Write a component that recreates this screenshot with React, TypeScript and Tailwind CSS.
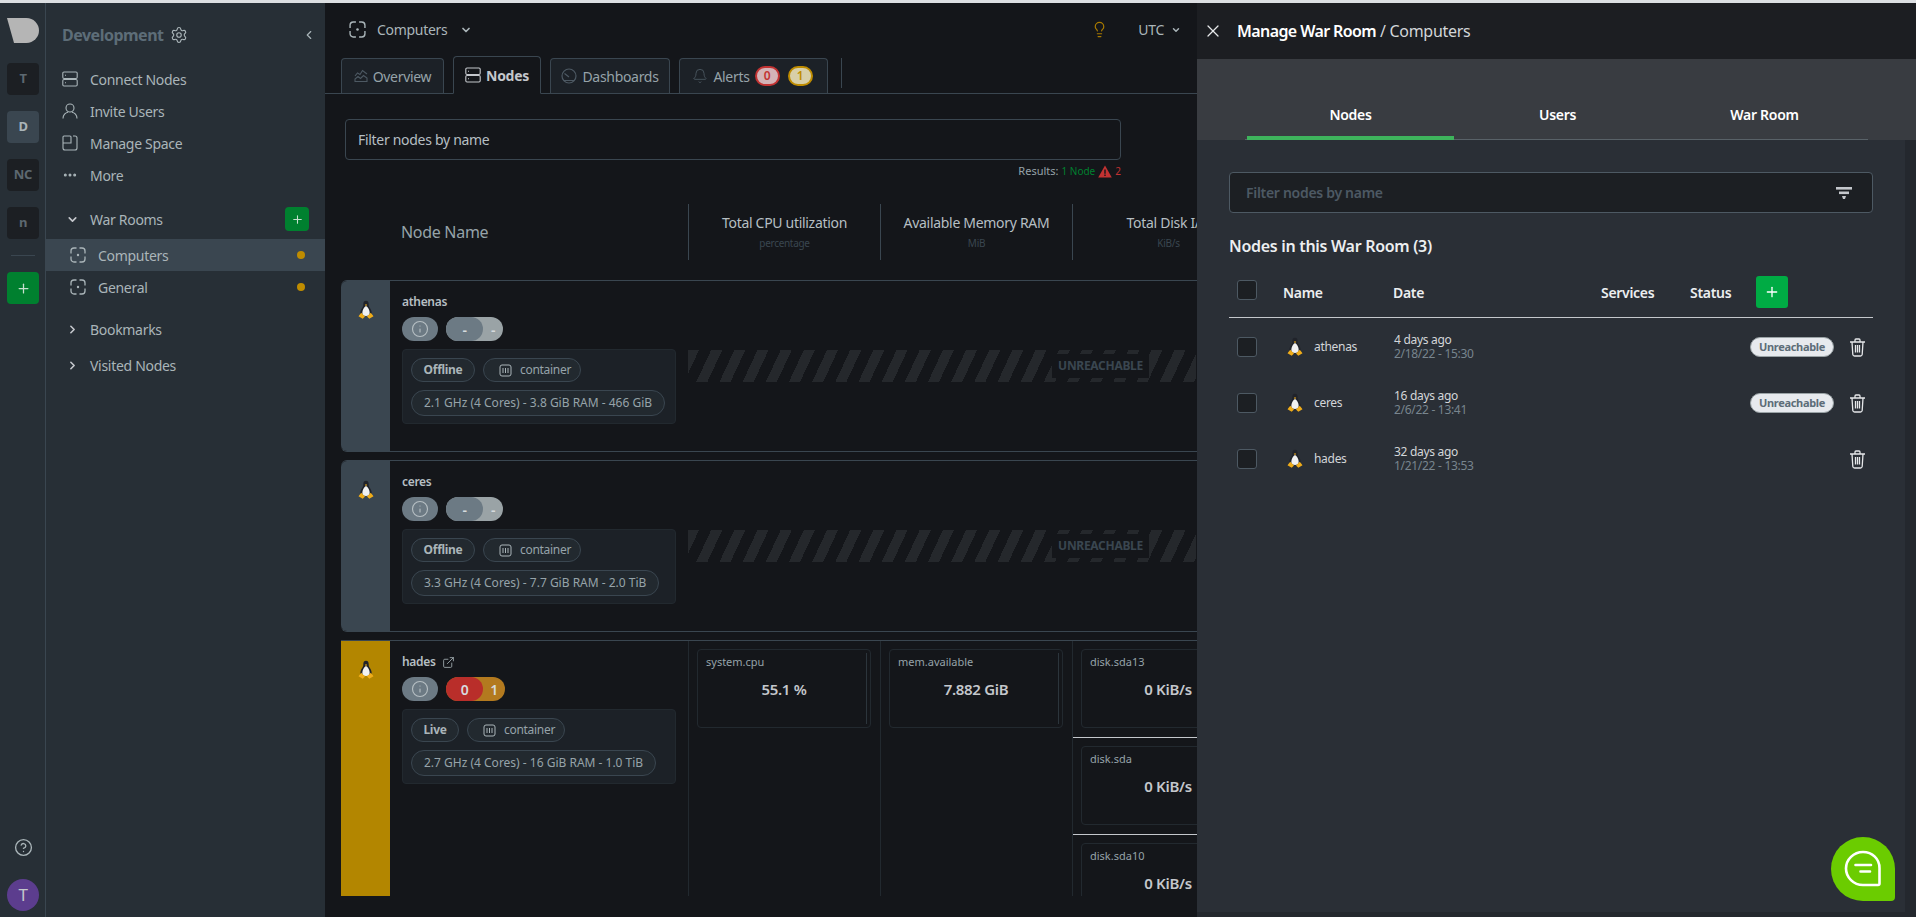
import React from "react";
import {
  Bell,
  ChevronDown,
  ChevronLeft,
  ChevronRight,
  CircleHelp,
  ExternalLink,
  Info,
  Lightbulb,
  MoreHorizontal,
  Plus,
  Settings,
  X,
} from "lucide-react";

const Tux = ({ size = 20 }: { size?: number }) => (
  <svg width={size} height={size} viewBox="0 0 20 20">
    <path d="M10 .8c-2 0-2.800 1.600-2.700 3.600.1 1.700-.7 2.700-1.700 4.400C4.500 10.700 4 12.700 4.600 15h10.800c.6-2.300.1-4.300-1-6.200-1-1.700-1.800-2.700-1.700-4.400C12.800 2.400 12 .8 10 .8z" fill="#20232a" />
    <path d="M10 6c-1.900 1-3.700 4.100-3.700 7 0 1.800 1.600 3 3.700 3s3.700-1.200 3.700-3c0-2.900-1.800-6-3.700-7z" fill="#f1f1f1" />
    <path d="M8.800 4.400h2.400L10 6.200z" fill="#f0ad1a" />
    <path d="M5.200 12.800l-2.700 3.400 4.200 2.600 2.300-2.400zM14.800 12.800l2.700 3.400-4.200 2.600-2.300-2.400z" fill="#f0ad1a" />
  </svg>
);

// server rack icon used in the sidebar and the Nodes tab
const NodesIcon = ({ className }: { className?: string }) => (
  <svg className={className} viewBox="0 0 16 16" fill="none" stroke="currentColor" strokeWidth="1.100">
    <rect x=".8" y="1" width="14.400" height="6.500" rx="1.200" />
    <rect x=".8" y="8.500" width="14.400" height="6.500" rx="1.200" />
    <path d="M3 4.200h1M3 11.800h1" />
  </svg>
);

const SpaceIcon = ({ className }: { className?: string }) => (
  <svg className={className} viewBox="0 0 16 16" fill="none" stroke="currentColor" strokeWidth="1.300">
    <path d="M6.500 1H4a3 3 0 0 0-3 3v2.500M9.500 1H12a3 3 0 0 1 3 3v2.500M6.500 15H4a3 3 0 0 1-3-3V9.500M9.500 15H12a3 3 0 0 0 3-3V9.500" />
    <circle cx="8" cy="8" r="1.200" fill="currentColor" stroke="none" />
  </svg>
);

const UserIcon = () => (
  <svg className="w-4 h-4" viewBox="0 0 16 16" fill="none" stroke="currentColor" strokeWidth="1.100">
    <circle cx="8" cy="5" r="4" />
    <path d="M1 15.500c0-3.500 2.500-6 5-6.300M15 15.500c0-3.500-2.500-6-5-6.300" />
  </svg>
);

const ManageIcon = () => (
  <svg className="w-4 h-4" viewBox="0 0 16 16" fill="none" stroke="currentColor" strokeWidth="1.100">
    <path d="M11 1h2a2 2 0 0 1 2 2v10a2 2 0 0 1-2 2H3a2 2 0 0 1-2-2V8h8V2a1 1 0 0 0-1-1H2a1 1 0 0 0-1 1v6" />
  </svg>
);

const OverviewIcon = () => (
  <svg className="w-[14px] h-[14px] text-[#4d5963]" viewBox="0 0 14 14" fill="none" stroke="currentColor" strokeWidth="1.100">
    <path d="M1 7l2.500-3L6 5.500 8.500 1.500 13 5M1 12.500V10l3-2.500 2.500 2 3-3L13 9v3.500z" />
  </svg>
);

const DashboardIcon = () => (
  <svg className="w-4 h-4 text-[#4d5963]" viewBox="0 0 16 16" fill="none" stroke="currentColor" strokeWidth="1.200">
    <circle cx="8" cy="8" r="7" />
    <path d="M8 9L3.500 5.500M2.500 12.500h11" />
  </svg>
);

const ContainerIcon = () => (
  <svg className="w-[13px] h-[13px] text-[#aab5b9]" viewBox="0 0 13 13" fill="none" stroke="currentColor">
    <rect x="1" y="1" width="11" height="11" rx="2" />
    <path d="M4 4v5M6.500 4v5M9 4v5" />
  </svg>
);

const TrashIcon = () => (
  <svg className="w-[17px] h-[19px] text-[#e6e8ea]" viewBox="0 0 17 19" fill="none" stroke="currentColor" strokeWidth="1.300">
    <path d="M1 4h15M6 4V2a1 1 0 0 1 1-1h3a1 1 0 0 1 1 1v2M3 4l.8 12.500A1.800 1.800 0 0 0 5.600 18h5.800a1.800 1.800 0 0 0 1.800-1.500L14 4M6.500 7v7.500M8.500 7v7.500M10.500 7v7.500" />
  </svg>
);

const FilterIcon = () => (
  <svg className="w-4 h-3 text-[#c4c7cc]" viewBox="0 0 16 12" fill="currentColor">
    <rect x="0" y="0" width="16" height="2.600" />
    <rect x="3" y="4.500" width="10" height="2.600" />
    <path d="M6 9h4l-1 3H7z" />
  </svg>
);

const SpaceTile = ({ label, active }: { label: string; active?: boolean }) => (
  <div
    className={`w-8 h-8 rounded flex items-center justify-center text-[13px] font-bold ${
      active ? "bg-[#3a4650] text-[#aab5b9]" : "bg-[#1c1f23] text-[#5d6870]"
    }`}
  >
    {label}
  </div>
);

const Rail = () => (
  <div className="w-[46px] shrink-0 bg-[#272f36] border-r border-[#3a4650] flex flex-col items-center pl-px pb-[6px]">
    <svg className="mt-[15px] w-8 h-[26px]" viewBox="0 0 32 26">
      <path d="M0 0h19.500a12.500 12.500 0 0 1 0 25H7z" fill="#b5b5b5" />
    </svg>
    <div className="mt-[19px] flex flex-col gap-4">
      <SpaceTile label="T" />
      <SpaceTile label="D" active />
      <SpaceTile label="NC" />
      <SpaceTile label="n" />
    </div>
    <div className="w-6 h-px bg-[#3a4650] mt-4" />
    <div className="mt-4 w-8 h-8 rounded bg-[#00802f] flex items-center justify-center">
      <Plus className="w-[15px] h-[15px] text-[#c7dfcf]" strokeWidth={2} />
    </div>
    <CircleHelp className="mt-auto w-[19px] h-[19px] text-[#aab5b9]" strokeWidth={1.700} />
    <div className="mt-[22px] w-8 h-8 rounded-full bg-[#5c3d8e] text-[#c4c7cc] flex items-center justify-center text-[17px]">
      T
    </div>
  </div>
);

const NavLink = ({ icon, label }: { icon: React.ReactNode; label: string }) => (
  <div className="h-8 flex items-center gap-3 pl-4 text-[14px] text-[#aab5b9]">
    <span className="w-4 flex justify-center">{icon}</span>
    {label}
  </div>
);

const RoomRow = ({ label, active }: { label: string; active?: boolean }) => (
  <div className={`h-8 flex items-center pl-6 pr-5 text-[14px] text-[#aab5b9] ${active ? "bg-[#3a4650]" : ""}`}>
    <SpaceIcon className="w-4 h-4 mr-3" />
    {label}
    <span className="ml-auto w-2 h-2 rounded-full bg-[#bf8c00]" />
  </div>
);

const Sidebar = () => (
  <div className="w-[279px] shrink-0 bg-[#272f36] flex flex-col">
    <div className="h-[26px] mt-[19px] flex items-center pl-4 pr-[9px]">
      <span className="text-[16px] font-bold text-[#5d6d78] tracking-[-0.5px]">Development</span>
      <Settings className="ml-[6px] w-[18px] h-[18px] text-[#aab5b9]" strokeWidth={1.500} />
      <ChevronLeft className="ml-auto w-[14px] h-[14px] text-[#aab5b9]" strokeWidth={2} />
    </div>
    <div className="mt-[15px] flex flex-col">
      <NavLink icon={<NodesIcon className="w-4 h-4" />} label="Connect Nodes" />
      <NavLink icon={<UserIcon />} label="Invite Users" />
      <NavLink icon={<ManageIcon />} label="Manage Space" />
      <NavLink icon={<MoreHorizontal className="w-4 h-4" strokeWidth={2.500} />} label="More" />
    </div>
    <div className="mt-3 h-8 flex items-center pl-[20px] pr-4 text-[14px] text-[#aab5b9]">
      <ChevronDown className="w-[13px] h-[13px] mr-[11px] text-[#c4c7cc]" strokeWidth={3} />
      War Rooms
      <div className="ml-auto w-6 h-6 rounded bg-[#00802f] flex items-center justify-center">
        <Plus className="w-[13px] h-[13px] text-[#c7dfcf]" strokeWidth={2} />
      </div>
    </div>
    <div className="mt-1 flex flex-col">
      <RoomRow label="Computers" active />
      <RoomRow label="General" />
    </div>
    <div className="mt-2 h-9 flex items-center pl-[20px] text-[14px] text-[#aab5b9]">
      <ChevronRight className="w-[13px] h-[13px] mr-[11px] text-[#c4c7cc]" strokeWidth={3} />
      Bookmarks
    </div>
    <div className="h-9 flex items-center pl-[20px] text-[14px] text-[#aab5b9]">
      <ChevronRight className="w-[13px] h-[13px] mr-[11px] text-[#c4c7cc]" strokeWidth={3} />
      Visited Nodes
    </div>
  </div>
);

const Tab = ({
  icon,
  label,
  children,
  active,
  className,
}: {
  icon: React.ReactNode;
  label: string;
  children?: React.ReactNode;
  active?: boolean;
  className: string;
}) => (
  <div
    className={`flex items-center justify-center gap-[5px] rounded-t border border-[#3a4650] text-[14px] ${className} ${
      active
        ? "h-[38px] border-b-[#14161a] bg-[#14161a] text-[#c4c7cc] font-bold -mb-px"
        : "h-[35px] border-b-0 bg-[#1c2127] text-[#96a3a9]"
    }`}
  >
    {icon}
    {label}
    {children}
  </div>
);

const TopBar = () => (
  <>
    <div className="h-[53px] shrink-0 flex items-center pl-[24px] pr-4 text-[14px] text-[#aab5b9]">
      <SpaceIcon className="w-[17px] h-[17px] mr-[11px]" />
      Computers
      <ChevronDown className="ml-[13px] w-[12px] h-[12px]" strokeWidth={3.500} />
      <Lightbulb className="ml-auto w-[17px] h-[17px] text-[#a87a00]" strokeWidth={1.700} />
      <span className="ml-[30px]">UTC</span>
      <ChevronDown className="ml-[7px] w-[10px] h-[10px]" strokeWidth={3.500} />
    </div>
    <div className="h-[38px] shrink-0 flex items-end pl-[16px] gap-[9px] border-b border-[#3a4650]">
      <Tab className="w-[103px]" icon={<OverviewIcon />} label="Overview" />
      <Tab className="w-[88px]" active icon={<NodesIcon className="w-4 h-[18px]" />} label="Nodes" />
      <Tab className="w-[120px]" icon={<DashboardIcon />} label="Dashboards" />
      <Tab className="w-[149px] pr-[2px]" icon={<Bell className="w-4 h-4 text-[#4d5963]" strokeWidth={1.300} />} label="Alerts">
        <span className="w-[25px] h-5 rounded-full bg-[#d4b3b7] border-2 border-[#c23232] text-[#c23232] text-[12px] font-semibold flex items-center justify-center">0</span>
        <span className="ml-[3px] w-[25px] h-5 rounded-full bg-[#d8cfa8] border-2 border-[#bf8c00] text-[#bf8c00] text-[12px] font-semibold flex items-center justify-center">1</span>
      </Tab>
      <div className="ml-[4px] mb-[5px] w-px h-[30px] bg-[#3a4650]" />
    </div>
  </>
);

const Filter = () => (
  <div className="pl-[20px] shrink-0">
    <div className="mt-[25px] w-[776px] h-[41px] rounded border border-[#3a4650] flex items-center pl-3 text-[14px] text-[#b6bfc3]">
      Filter nodes by name
    </div>
    <div className="w-[776px] h-[22px] flex items-center justify-end gap-[3px] text-[11px] text-[#96a3a9] tracking-normal">
      Results: <span className="text-[#00802f] text-[10px]">1 Node</span>
      <svg className="w-[14px] h-[13px]" viewBox="0 0 14 13">
        <path d="M7 .5l6.800 12H.2z" fill="#c23232" />
        <path d="M6.300 4.500h1.400v4.200H6.300zM6.300 9.600h1.400v1.400H6.300z" fill="#14161a" />
      </svg>
      <span className="text-[#c23232] text-[10px]">2</span>
    </div>
  </div>
);

const HeaderCell = ({ title, unit }: { title: string; unit: string }) => (
  <div className="w-[192px] shrink-0 border-l border-[#3a4650] flex flex-col items-center justify-center whitespace-nowrap">
    <span className="text-[14px] text-[#b6bfc3] mt-[-1px]">{title}</span>
    <span className="text-[10px] text-[#3a4650] mt-[3px]">{unit}</span>
  </div>
);

const TableHead = () => (
  <div className="mt-[22px] h-[56px] shrink-0 flex pl-[16px]">
    <div className="w-[347px] shrink-0 flex items-center pl-[60px] text-[16px] text-[#96a3a9]">Node Name</div>
    <HeaderCell title="Total CPU utilization" unit="percentage" />
    <HeaderCell title="Available Memory RAM" unit="MiB" />
    <HeaderCell title="Total Disk I/O" unit="KiB/s" />
  </div>
);

const Pill = ({ children, className = "" }: { children: React.ReactNode; className?: string }) => (
  <div className={`flex items-center rounded-full border border-[#3a4650] bg-[#22292f] text-[12px] text-[#96a3a9] ${className}`}>
    {children}
  </div>
);

const NodeInfo = ({
  name,
  status,
  spec,
  link,
  critical,
  warning,
  live,
}: {
  name: string;
  status: string;
  spec: string;
  link?: boolean;
  critical: string;
  warning: string;
  live?: boolean;
}) => (
  <div className="w-[298px] shrink-0 pl-3 pt-[13px]">
    <div className="h-[16px] flex items-center gap-[6px] text-[12px] font-semibold text-[#b6bfc3]">
      {name}
      {link && <ExternalLink className="w-[13px] h-[13px] text-[#aab5b9]" strokeWidth={1.500} />}
    </div>
    <div className="mt-[7px] h-6 flex gap-2">
      <div className="w-9 rounded-full bg-[#6c7a84] flex items-center justify-center">
        <Info className="w-[18px] h-[18px] text-[#b6bfc3]" strokeWidth={1.500} />
      </div>
      <div className={`relative rounded-full flex items-center text-[14px] font-semibold text-[#d7dbde] ${live ? "w-[59px] bg-[#b37a1f]" : "w-[57px] bg-[#9aa3a6]"}`}>
        <div className={`absolute left-0 top-0 bottom-0 w-[37px] rounded-full flex items-center justify-center ${live ? "bg-[#b92e2a]" : "bg-[#6c7a84]"}`}>
          {critical}
        </div>
        <span className="ml-[37px] flex-1 text-center">{warning}</span>
      </div>
    </div>
    <div className="mt-2 w-[274px] rounded-sm border border-[#22292f] bg-[#1c2127] px-2 pt-2 pb-[7px]">
      <div className="flex gap-2">
        <Pill className={`h-6 justify-center font-bold text-[#aab5b9] ${live ? "w-[48px]" : "w-[64px]"}`}>{status}</Pill>
        <Pill className="h-6 w-[98px] pl-[15px] gap-[8px]">
          <ContainerIcon />
          container
        </Pill>
      </div>
      <Pill className="mt-2 h-[26px] w-fit px-[12px] whitespace-nowrap tracking-normal">{spec}</Pill>
    </div>
  </div>
);

const Unreachable = () => (
  <div className="mt-[69px] w-[508px] h-8 shrink-0 relative bg-[repeating-linear-gradient(115deg,#25282c_0,#25282c_10px,transparent_10px,transparent_21px)]">
    <div className="absolute left-[364px] top-1 w-[97px] h-6 bg-[#14161a] flex items-center justify-center text-[12px] font-bold text-[#3a4650]">
      UNREACHABLE
    </div>
  </div>
);

const OfflineCard = ({ name, spec }: { name: string; spec: string }) => (
  <div className="h-[172px] shrink-0 ml-[16px] mb-2 flex rounded-l-md border-y border-[#3a4650]">
    <div className="w-[49px] shrink-0 bg-[#3a4650] rounded-l-md flex justify-center pt-[19px]">
      <Tux />
    </div>
    <NodeInfo name={name} status="Offline" spec={spec} critical="-" warning="-" />
    <Unreachable />
  </div>
);

const Metric = ({ title, value }: { title: string; value: string }) => (
  <div className="w-[174px] h-[79px] shrink-0 rounded border border-[#22292f] px-2 pt-1 relative">
    <div className="text-[11px] text-[#96a3a9] tracking-normal">{title}</div>
    <div className="mt-[7px] text-center text-[15px] font-semibold text-[#c4c7cc] whitespace-nowrap">{value}</div>
    <div className="absolute right-[3px] top-[3px] bottom-[3px] w-px bg-[#2c353c]" />
  </div>
);

const MetricColumn = ({ children }: { children: React.ReactNode }) => (
  <div className="w-[192px] shrink-0 border-l border-[#22292f] pl-[8px] pt-2">{children}</div>
);

const LiveCard = () => (
  <div className="h-[256px] shrink-0 ml-[16px] flex border-t border-[#3a4650] overflow-hidden">
    <div className="w-[49px] shrink-0 bg-[#b38600] flex justify-center pt-[19px]">
      <Tux />
    </div>
    <NodeInfo name="hades" link status="Live" spec="2.7 GHz (4 Cores) - 16 GiB RAM - 1.0 TiB" critical="0" warning="1" live />
    <MetricColumn>
      <Metric title="system.cpu" value="55.1 %" />
    </MetricColumn>
    <MetricColumn>
      <Metric title="mem.available" value="7.882 GiB" />
    </MetricColumn>
    <div className="w-[192px] shrink-0 border-l border-[#22292f] pt-2 flex flex-col">
      <div className="shrink-0 pl-[8px]"><Metric title="disk.sda13" value="0 KiB/s" /></div>
      <div className="shrink-0 mt-[9px] h-px bg-[#c4c7cc]" />
      <div className="shrink-0 pl-[8px] mt-2"><Metric title="disk.sda" value="0 KiB/s" /></div>
      <div className="shrink-0 mt-[9px] h-px bg-[#c4c7cc]" />
      <div className="shrink-0 pl-[8px] mt-2"><Metric title="disk.sda10" value="0 KiB/s" /></div>
    </div>
  </div>
);

const Main = () => (
  <div className="w-[872px] shrink-0 bg-[#14161a] flex flex-col overflow-hidden">
    <TopBar />
    <Filter />
    <TableHead />
    <div className="mt-[20px] flex flex-col">
      <OfflineCard name="athenas" spec="2.1 GHz (4 Cores) - 3.8 GiB RAM - 466 GiB" />
      <OfflineCard name="ceres" spec="3.3 GHz (4 Cores) - 7.7 GiB RAM - 2.0 TiB" />
      <LiveCard />
    </div>
  </div>
);

const Checkbox = () => <div className="w-5 h-5 rounded-[3px] border border-[#4d5963] bg-[#1c1f23]" />;

const rows = [
  { name: "athenas", ago: "4 days ago", date: "2/18/22", time: "15:30", unreachable: true },
  { name: "ceres", ago: "16 days ago", date: "2/6/22", time: "13:41", unreachable: true },
  { name: "hades", ago: "32 days ago", date: "1/21/22", time: "13:53", unreachable: false },
];

const PanelTab = ({ label, active }: { label: string; active?: boolean }) => (
  <div
    className={`w-[207px] h-[47px] pb-px flex items-center justify-center border-b-4 -mb-px ${
      active ? "border-[#3eb45c] ml-[2px]" : "border-transparent"
    }`}
  >
    {label}
  </div>
);

const Panel = () => (
  <div className="w-[719px] shrink-0 bg-[#24282e] flex flex-col relative">
    <div className="h-[56px] shrink-0 bg-[#1c1e22] flex items-center pl-[6px] text-[16px] text-[#d3d6d9]">
      <X className="w-5 h-5 text-[#e6e8ea]" strokeWidth={1.500} />
      <span className="ml-[14px] font-semibold text-white tracking-[-0.6px]">Manage War Room</span>
      <span>&nbsp;/ Computers</span>
    </div>
    <div className="h-[81px] shrink-0 bg-[#393c41] pl-[48px] flex items-end">
      <div className="w-[623px] flex border-b border-[#596268] text-[14px] font-semibold text-white">
        <PanelTab label="Nodes" active />
        <PanelTab label="Users" />
        <PanelTab label="War Room" />
      </div>
    </div>
    <div className="flex-1 mr-[11px] mb-[5px] bg-[#2a2f36] pl-[32px] pr-[32px]">
      <div className="mt-[32px] h-[41px] rounded border border-[#4d5963] bg-[#1c1f23] flex items-center pl-4 pr-[20px] text-[14px] font-semibold text-[#4d5963]">
        Filter nodes by name
        <span className="ml-auto"><FilterIcon /></span>
      </div>
      <div className="mt-[21px] text-[16px] font-semibold text-[#eceef0]">Nodes in this War Room (3)</div>
      <div className="mt-[18px] h-[42px] flex items-start border-b border-[#c4c7cc] text-[14px] font-semibold text-[#eceef0]">
        <div className="ml-2 mt-1"><Checkbox /></div>
        <div className="ml-[26px] w-[110px] mt-[6px]">Name</div>
        <div className="w-[208px] mt-[6px]">Date</div>
        <div className="w-[89px] mt-[6px]">Services</div>
        <div className="w-[66px] mt-[6px]">Status</div>
        <div className="w-8 h-8 rounded-[3px] bg-[#00ab44] flex items-center justify-center">
          <Plus className="w-4 h-4 text-white" strokeWidth={2} />
        </div>
      </div>
      <div className="mt-px">
        {rows.map((r) => (
          <div key={r.name} className="h-[56px] flex items-center text-[12px]">
            <div className="ml-2"><Checkbox /></div>
            <div className="ml-[28px] w-5 flex justify-center"><Tux /></div>
            <div className="ml-[9px] w-[80px] text-[#d3d6d9]">{r.name}</div>
            <div className="leading-[14px]">
              <div className="text-[#d3d6d9]">{r.ago}</div>
              <div className="text-[#78858e]">{r.date} - {r.time}</div>
            </div>
            <div className="ml-auto flex items-center">
              {r.unreachable && (
                <div className="w-[84px] h-5 rounded-full bg-[#e7eaee] border border-[#9aa3a6] text-[#5d6d78] text-[11px] font-bold flex items-center justify-center">
                  Unreachable
                </div>
              )}
              <span className="ml-[15px] mr-[7px]"><TrashIcon /></span>
            </div>
          </div>
        ))}
      </div>
    </div>
    <div className="absolute right-[21px] bottom-[16px] w-16 h-16 rounded-[32px] rounded-br-[4px] bg-[#6bcc00] flex items-center justify-center">
      <svg className="w-10 h-10" viewBox="0 0 40 40" fill="none" stroke="white" strokeWidth="2.600" strokeLinecap="round">
        <path d="M20 3c9.400 0 16.500 7.100 16.500 16v15.500a1.500 1.500 0 0 1-1.500 1.500H20C10.600 36 3 28.400 3 19.500S10.600 3 20 3z" />
        <path d="M12.500 16h15.500M17.500 22.500h9.500" />
      </svg>
    </div>
  </div>
);

export default function App() {
  return (
    <div className="w-[1916px] h-[917px] overflow-hidden flex flex-col bg-[#14161a] font-['Noto_Sans',sans-serif] tracking-[-0.3px]">
      <div className="h-[3px] shrink-0 bg-[#dcdfe2]" />
      <div className="flex-1 flex min-h-0">
        <Rail />
        <Sidebar />
        <Main />
        <Panel />
      </div>
    </div>
  );
}
